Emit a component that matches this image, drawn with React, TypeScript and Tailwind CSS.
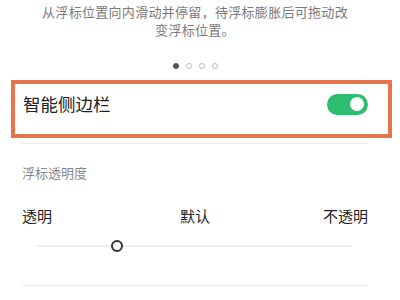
export default function App() {
  return (
    <div className="h-[300px] w-[400px] overflow-hidden bg-white font-['Noto_Sans_CJK_SC','Noto_Sans',sans-serif]">
      <p className="pr-[10px] pt-[3px] text-center text-[13px] leading-[18px] tracking-[0.3px] text-[#7a7a7a]">
        从浮标位置向内滑动并停留，待浮标膨胀后可拖动改
        <br />
        变浮标位置。
      </p>

      <div className="mt-[24px] flex h-[6px] items-center justify-center gap-[7px] pr-[10px]">
        <span className="h-[6px] w-[6px] rounded-full bg-[#555]" />
        <span className="h-[6px] w-[6px] rounded-full border border-[#bbb]" />
        <span className="h-[6px] w-[6px] rounded-full border border-[#bbb]" />
        <span className="h-[6px] w-[6px] rounded-full border border-[#bbb]" />
      </div>

      <div className="ml-[11px] mt-[11px] h-[58px] w-[381px] border-[4px] border-[#e8744b]">
        <div className="flex h-full items-center justify-between pb-[10px] pl-[8px] pr-[20px]">
          <span className="text-[17.5px] leading-[22px] text-[#222]">智能侧边栏</span>
          <div className="flex h-[21px] w-[41px] items-center justify-end rounded-full bg-[#2dbd6e] pr-[4px]">
            <span className="h-[14px] w-[14px] rounded-full bg-white" />
          </div>
        </div>
      </div>

      <div className="ml-[22px] mt-[5px] h-px w-[346px] bg-[#ececec]" />

      <div className="mt-[20px] pl-[22px] text-[13px] leading-[18px] text-[#888]">浮标透明度</div>

      <div className="ml-[22px] mt-[24px] grid w-[346px] grid-cols-3 text-[15px] leading-[20px] text-[#222]">
        <span>透明</span>
        <span className="text-center">默认</span>
        <span className="text-right">不透明</span>
      </div>

      <div className="relative ml-[37px] mt-[14px] flex h-[12px] w-[315px] items-center">
        <div className="h-[2px] w-full bg-[#eeeeee]" />
        <span className="absolute left-[74px] top-0 h-[12px] w-[12px] rounded-full border-2 border-[#333] bg-white" />
      </div>

      <div className="ml-[22px] mt-[33px] h-px w-[346px] bg-[#ececec]" />
    </div>
  );
}
